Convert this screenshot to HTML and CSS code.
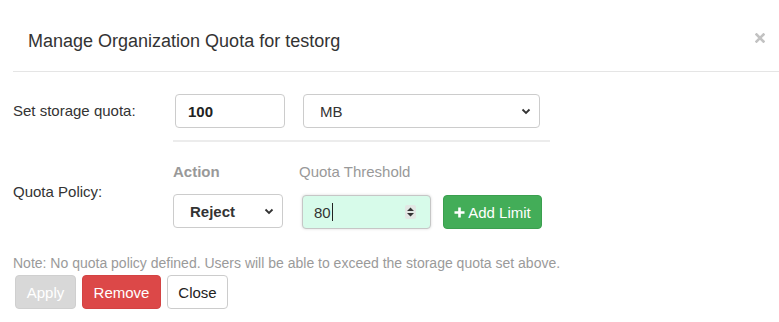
FILE: index.html
```html
<!DOCTYPE html>
<html>
<head>
<meta charset="utf-8">
<link rel="stylesheet" href="styles.css">
</head>
<body>
<div class="modal">
  <div class="modal-header">
    <h4 class="title">Manage Organization Quota for testorg</h4>
    <span class="close" aria-label="Close">
      <svg width="10" height="10" viewBox="0 0 10 10"><path d="M1.5 1.5 L8.5 8.5 M8.5 1.5 L1.5 8.5" stroke="#c2c2c2" stroke-width="2.6" stroke-linecap="square"/></svg>
    </span>
  </div>
  <div class="modal-body">
    <div class="row row-storage">
      <label class="label">Set storage quota:</label>
      <input class="control input-size" type="text" value="100">
      <div class="select-wrap select-unit">
        <select class="control select"><option>MB</option></select>
        <svg class="chevron" width="10" height="7" viewBox="0 0 10 7"><path d="M1.5 1.5 L5 5 L8.5 1.5" fill="none" stroke="#333" stroke-width="1.8"/></svg>
      </div>
    </div>
    <hr class="divider">
    <div class="row row-policy">
      <label class="label label-policy">Quota Policy:</label>
      <div class="policy-grid">
        <div class="col-head head-action">Action</div>
        <div class="col-head head-threshold">Quota Threshold</div>
        <div></div>
        <div class="select-wrap select-action">
          <select class="control select bold"><option>Reject</option></select>
          <svg class="chevron" width="10" height="7" viewBox="0 0 10 7"><path d="M1.5 1.5 L5 5 L8.5 1.5" fill="none" stroke="#333" stroke-width="1.8"/></svg>
        </div>
        <div class="threshold">
          <span class="threshold-value">80</span><span class="caret"></span>
          <span class="spinner">
            <svg width="11" height="14" viewBox="0 0 11 14"><path d="M5.5 2.5 L9 6 L2 6 Z M2 8 L9 8 L5.5 11.5 Z" fill="#333"/></svg>
          </span>
        </div>
        <button class="btn btn-success">
          <svg width="11" height="11" viewBox="0 0 11 11"><path d="M5.5 0.5 V10.5 M0.5 5.5 H10.5" stroke="#fff" stroke-width="2.6"/></svg>
          <span>Add Limit</span>
        </button>
      </div>
    </div>
    <p class="note">Note: No quota policy defined. Users will be able to exceed the storage quota set above.</p>
    <div class="actions">
      <button class="btn btn-disabled">Apply</button>
      <button class="btn btn-danger">Remove</button>
      <button class="btn btn-default">Close</button>
    </div>
  </div>
</div>
</body>
</html>
```

FILE: styles.css
```css
* { box-sizing: border-box; }
body {
  margin: 0;
  background: #fff;
  font-family: "Liberation Sans", Arial, Helvetica, sans-serif;
  color: #333;
}
.modal {
  margin-left: 13px;
  width: 770px;
}
.modal-header {
  display: flex;
  align-items: center;
  justify-content: space-between;
  padding: 31px 15px 20px 15px;
  border-bottom: 1px solid #e5e5e5;
  height: 72px;
}
.title {
  margin: 0;
  font-size: 18px;
  font-weight: normal;
  line-height: 20px;
  color: #333;
}
.close {
  display: flex;
  margin-top: -6px;
  margin-right: 3px;
}
.modal-body {
  padding-top: 22px;
}
.row {
  display: flex;
}
.row-storage {
  align-items: center;
  height: 34px;
}
.label {
  width: 162px;
  font-size: 15px;
  line-height: 20px;
  color: #333;
  flex: none;
}
.control {
  height: 34px;
  border: 1px solid #ccc;
  border-radius: 4px;
  background: #fff;
  font-family: "Liberation Sans", Arial, Helvetica, sans-serif;
  font-size: 15px;
  color: #333;
  outline: none;
}
.input-size {
  width: 110px;
  padding: 0 12px;
  font-weight: bold;
  color: #222;
}
.select-wrap {
  position: relative;
}
.select-unit {
  width: 237px;
  margin-left: 18px;
}
.select {
  -webkit-appearance: none;
  appearance: none;
  width: 100%;
  padding: 0 16px;
}
.bold { font-weight: bold; }
.chevron {
  position: absolute;
  right: 9px;
  top: 14px;
  pointer-events: none;
}
.divider {
  margin: 12px 0 0 160px;
  width: 377px;
  border: 0;
  border-top: 2px solid #ececec;
  height: 0;
}
.row-policy {
  margin-top: 20px;
}
.label-policy {
  margin-top: 20px;
  width: 160px;
}
.policy-grid {
  display: grid;
  grid-template-columns: 126px 144px auto;
  grid-template-rows: 20px 34px;
  row-gap: 13px;
  align-items: center;
}
.col-head {
  font-size: 15px;
  line-height: 20px;
  color: #999;
}
.head-action { font-weight: bold; }
.select-action {
  width: 110px;
  align-self: start;
  margin-top: -1px;
}
.threshold {
  display: flex;
  align-items: center;
  width: 129px;
  height: 34px;
  margin-left: 3px;
  padding: 0 14px 0 11px;
  background: #d7fbea;
  border: 1px solid #c6c6c6;
  border-radius: 4px;
  box-shadow: 0 0 3px rgba(0,0,0,0.15);
  font-size: 15px;
  color: #333;
}
.caret {
  width: 1px;
  height: 18px;
  background: #222;
  margin-left: 1px;
}
.spinner {
  display: flex;
  margin-left: auto;
  background: #e2e7e4;
  border-radius: 2px;
}
.btn {
  height: 34px;
  border-radius: 4px;
  border: 1px solid transparent;
  font-family: "Liberation Sans", Arial, Helvetica, sans-serif;
  font-size: 15px;
  padding: 0 12px;
  display: inline-flex;
  align-items: center;
  justify-content: center;
  gap: 3px;
  white-space: nowrap;
  cursor: pointer;
}
.btn-success {
  width: 99px;
  background: #43ad58;
  border-color: #3b9f4f;
  color: #fff;
  padding: 0 8px;
}
.note {
  margin: 24px 0 0 0;
  font-size: 14px;
  line-height: 20px;
  color: #9a9a9a;
}
.actions {
  display: flex;
  gap: 6px;
  margin-top: 2px;
  margin-left: 2px;
}
.btn-disabled {
  width: 61px;
  background: #d8d8d8;
  border-color: #cfcfcf;
  color: #fff;
}
.btn-danger {
  width: 79px;
  background: #dc4848;
  border-color: #d34343;
  color: #fff;
}
.btn-default {
  width: 61px;
  background: #fff;
  border-color: #ccc;
  color: #222;
}
```
